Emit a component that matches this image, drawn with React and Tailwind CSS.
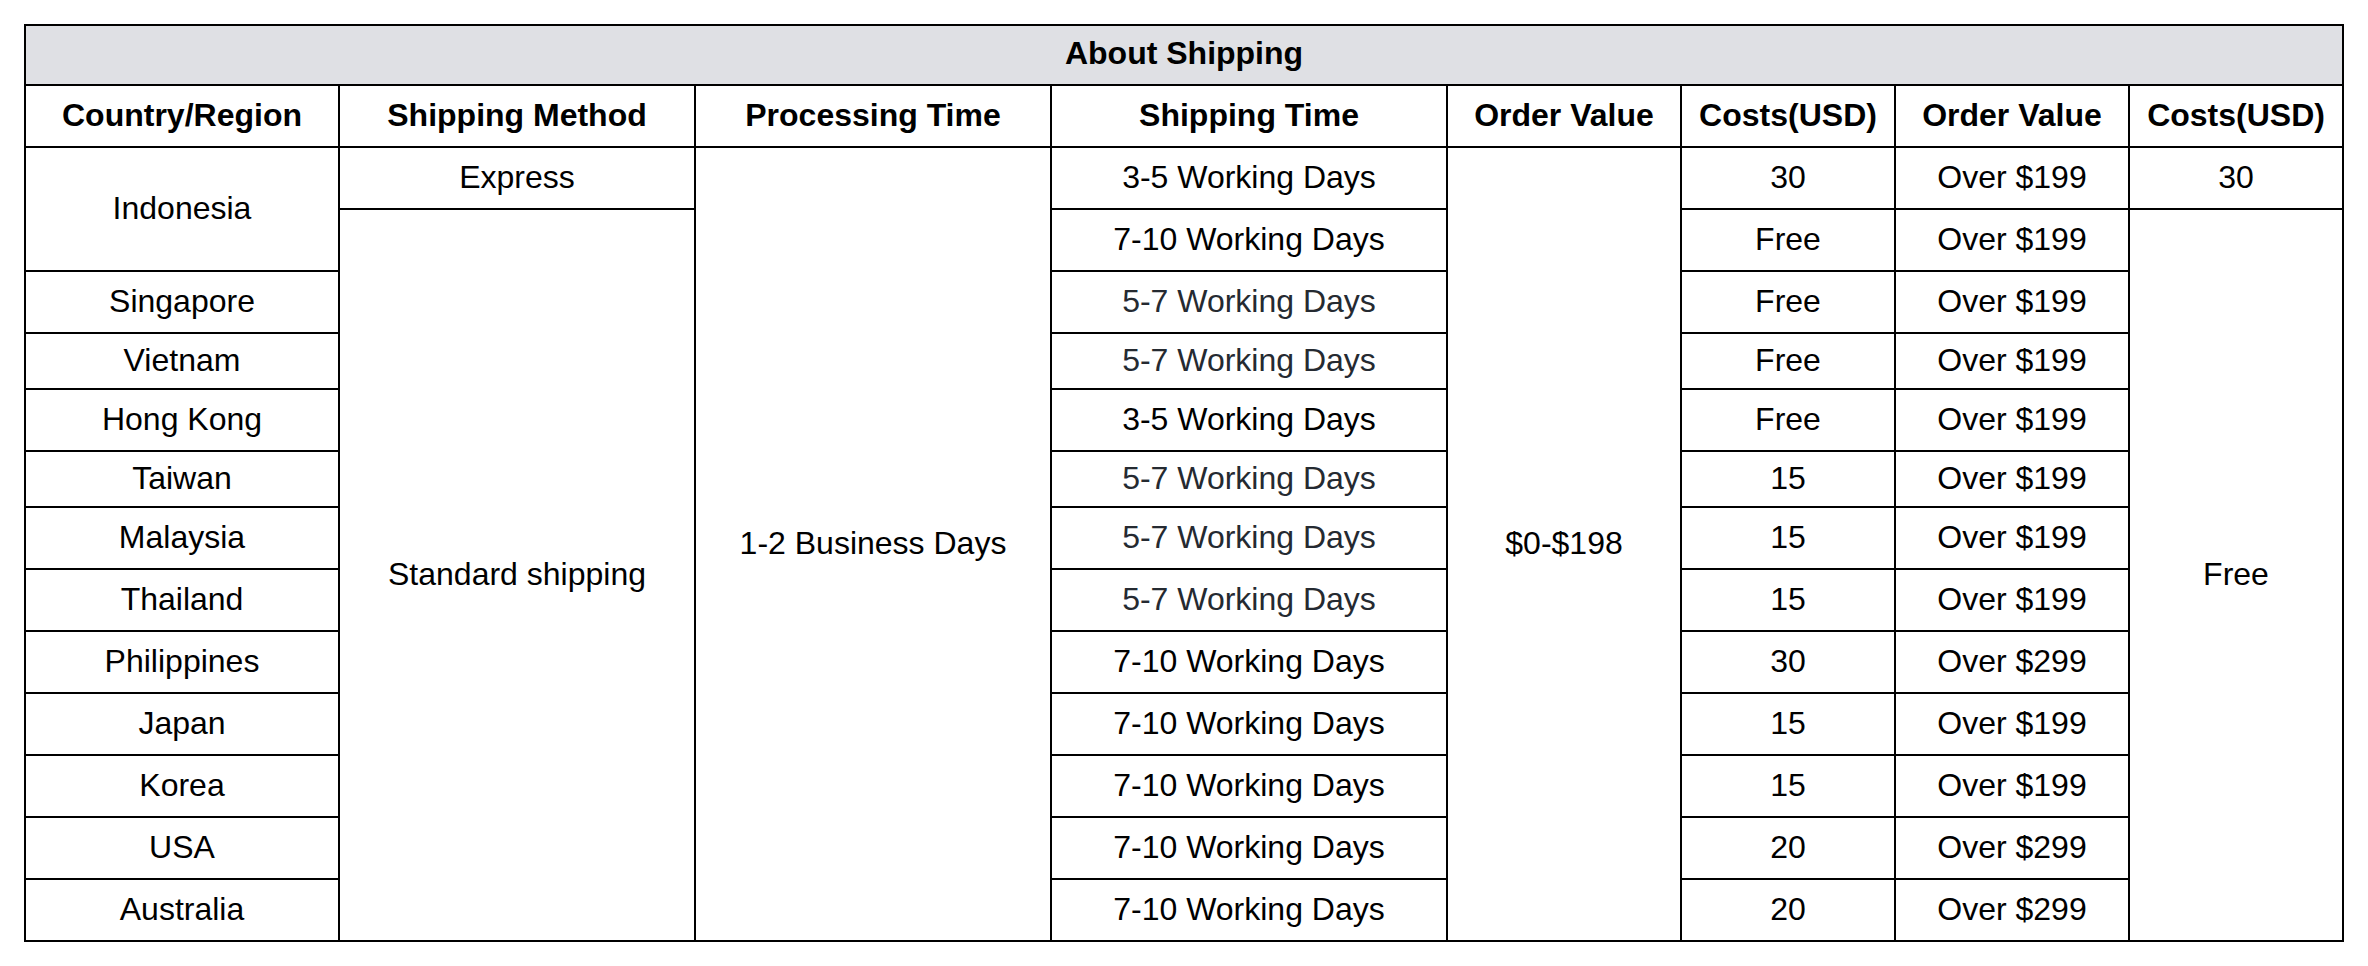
const rows = [
  { country: 'Indonesia', time: '3-5 Working Days', cost: '30', over: 'Over $199' },
  { time: '7-10 Working Days', cost: 'Free', over: 'Over $199' },
  { country: 'Singapore', time: '5-7 Working Days', cost: 'Free', over: 'Over $199', dim: true },
  { country: 'Vietnam', time: '5-7 Working Days', cost: 'Free', over: 'Over $199', dim: true, short: true },
  { country: 'Hong Kong', time: '3-5 Working Days', cost: 'Free', over: 'Over $199' },
  { country: 'Taiwan', time: '5-7 Working Days', cost: '15', over: 'Over $199', dim: true, short: true },
  { country: 'Malaysia', time: '5-7 Working Days', cost: '15', over: 'Over $199', dim: true },
  { country: 'Thailand', time: '5-7 Working Days', cost: '15', over: 'Over $199', dim: true },
  { country: 'Philippines', time: '7-10 Working Days', cost: '30', over: 'Over $299' },
  { country: 'Japan', time: '7-10 Working Days', cost: '15', over: 'Over $199' },
  { country: 'Korea', time: '7-10 Working Days', cost: '15', over: 'Over $199' },
  { country: 'USA', time: '7-10 Working Days', cost: '20', over: 'Over $299' },
  { country: 'Australia', time: '7-10 Working Days', cost: '20', over: 'Over $299' },
];

const headers = [
  'Country/Region',
  'Shipping Method',
  'Processing Time',
  'Shipping Time',
  'Order Value',
  'Costs(USD)',
  'Order Value',
  'Costs(USD)',
];

const cell = 'border-2 border-black px-0 pt-0 pb-[2px] text-center align-middle';

export default function App() {
  return (
    <div className="min-h-screen bg-white pt-[24px] pl-[24px] font-['Liberation_Sans',Arial,sans-serif] text-black">
      <table className="w-[2318px] table-fixed border-collapse text-[32px] leading-none">
        <colgroup>
          <col className="w-[314px]" />
          <col className="w-[356px]" />
          <col className="w-[356px]" />
          <col className="w-[396px]" />
          <col className="w-[234px]" />
          <col className="w-[214px]" />
          <col className="w-[234px]" />
          <col className="w-[214px]" />
        </colgroup>
        <thead>
          <tr>
            <th
              colSpan={8}
              className="h-[60px] border-2 border-black bg-[#dfe0e4] px-0 pt-0 pb-[4px] text-center align-middle font-bold"
            >
              About Shipping
            </th>
          </tr>
          <tr>
            {headers.map((h, i) => (
              <th key={i} className={`${cell} h-[62px] font-bold`}>
                {h}
              </th>
            ))}
          </tr>
        </thead>
        <tbody>
          {rows.map((r, i) => (
            <tr key={i}>
              {i === 0 && (
                <td rowSpan={2} className={cell}>
                  Indonesia
                </td>
              )}
              {i > 1 && <td className={cell}>{r.country}</td>}
              {i === 0 && <td className={cell}>Express</td>}
              {i === 1 && (
                <td rowSpan={12} className={cell}>
                  Standard shipping
                </td>
              )}
              {i === 0 && (
                <td rowSpan={13} className={cell}>
                  1-2 Business Days
                </td>
              )}
              <td
                className={`${cell} ${r.short ? 'h-[56px]' : 'h-[62px]'} ${
                  r.dim ? 'text-[#252a31]' : ''
                }`}
              >
                {r.time}
              </td>
              {i === 0 && (
                <td rowSpan={13} className={cell}>
                  $0-$198
                </td>
              )}
              <td className={cell}>{r.cost}</td>
              <td className={cell}>{r.over}</td>
              {i === 0 && <td className={cell}>30</td>}
              {i === 1 && (
                <td rowSpan={12} className={cell}>
                  Free
                </td>
              )}
            </tr>
          ))}
        </tbody>
      </table>
    </div>
  );
}
